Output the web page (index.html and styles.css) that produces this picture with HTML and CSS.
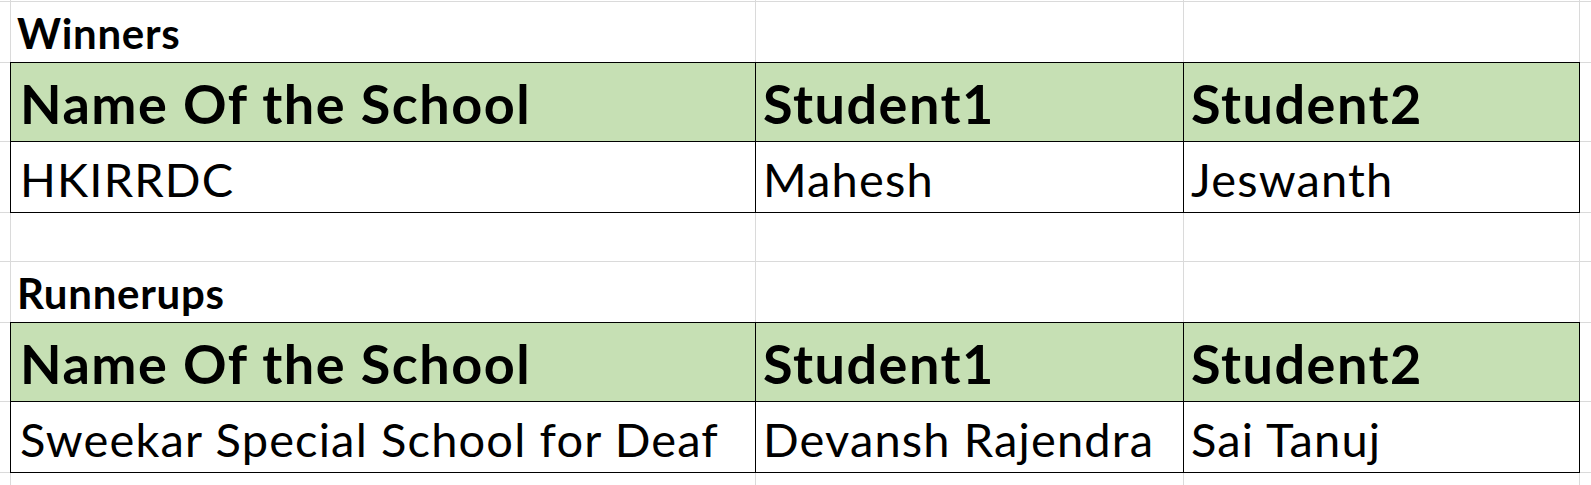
FILE: index.html
```html
<!DOCTYPE html>
<html>
<head>
<meta charset="utf-8">
<title>Winners and Runnerups</title>
<link rel="stylesheet" href="styles.css">
</head>
<body>
<div class="sheet">
  <div class="cell"></div><div class="cell"></div><div class="cell"></div><div class="cell"></div><div class="cell"></div>

  <div class="cell"></div><div class="cell title">Winners</div><div class="cell"></div><div class="cell"></div><div class="cell"></div>

  <div class="cell"></div>
  <div class="cell tc th first">Name Of the School</div>
  <div class="cell tc th">Student1</div>
  <div class="cell tc th">Student2</div>
  <div class="cell"></div>

  <div class="cell"></div>
  <div class="cell tc td first">HKIRRDC</div>
  <div class="cell tc td">Mahesh</div>
  <div class="cell tc td">Jeswanth</div>
  <div class="cell"></div>

  <div class="cell"></div><div class="cell"></div><div class="cell"></div><div class="cell"></div><div class="cell"></div>

  <div class="cell"></div><div class="cell title">Runnerups</div><div class="cell"></div><div class="cell"></div><div class="cell"></div>

  <div class="cell"></div>
  <div class="cell tc th first">Name Of the School</div>
  <div class="cell tc th">Student1</div>
  <div class="cell tc th">Student2</div>
  <div class="cell"></div>

  <div class="cell"></div>
  <div class="cell tc td first">Sweekar Special School for Deaf</div>
  <div class="cell tc td">Devansh Rajendra</div>
  <div class="cell tc td">Sai Tanuj</div>
  <div class="cell"></div>

  <div class="cell"></div><div class="cell"></div><div class="cell"></div><div class="cell"></div><div class="cell"></div>
</div>
</body>
</html>
```

FILE: styles.css
```css
html, body {
  margin: 0;
  padding: 0;
  background: #ffffff;
}

.sheet {
  display: grid;
  grid-template-columns: 10px 744px 427px 395px 1fr;
  grid-template-rows: 1px 60px 78px 70px 48px 60px 78px 70px 1fr;
  gap: 1px;
  height: 485px;
  overflow: hidden;
  background: #dadada;
  font-family: Lato, "Open Sans", sans-serif;
  color: #000;
}

.cell {
  background: #ffffff;
  display: flex;
  align-items: flex-end;
  white-space: nowrap;
  overflow: visible;
  line-height: 1;
  min-width: 0;
}

.tc {
  outline: 1px solid #000;
}

.title {
  font-weight: 700;
  font-size: 42px;
  letter-spacing: 0.7px;
  padding: 0 0 8px 6px;
}

.th {
  background: #c6e0b4;
  font-weight: 700;
  font-size: 54px;
  letter-spacing: 1.5px;
  padding: 0 0 10px 7px;
}

.td {
  font-size: 47px;
  letter-spacing: 1.15px;
  padding: 0 0 9px 7px;
}

.first {
  padding-left: 9px;
}
```
